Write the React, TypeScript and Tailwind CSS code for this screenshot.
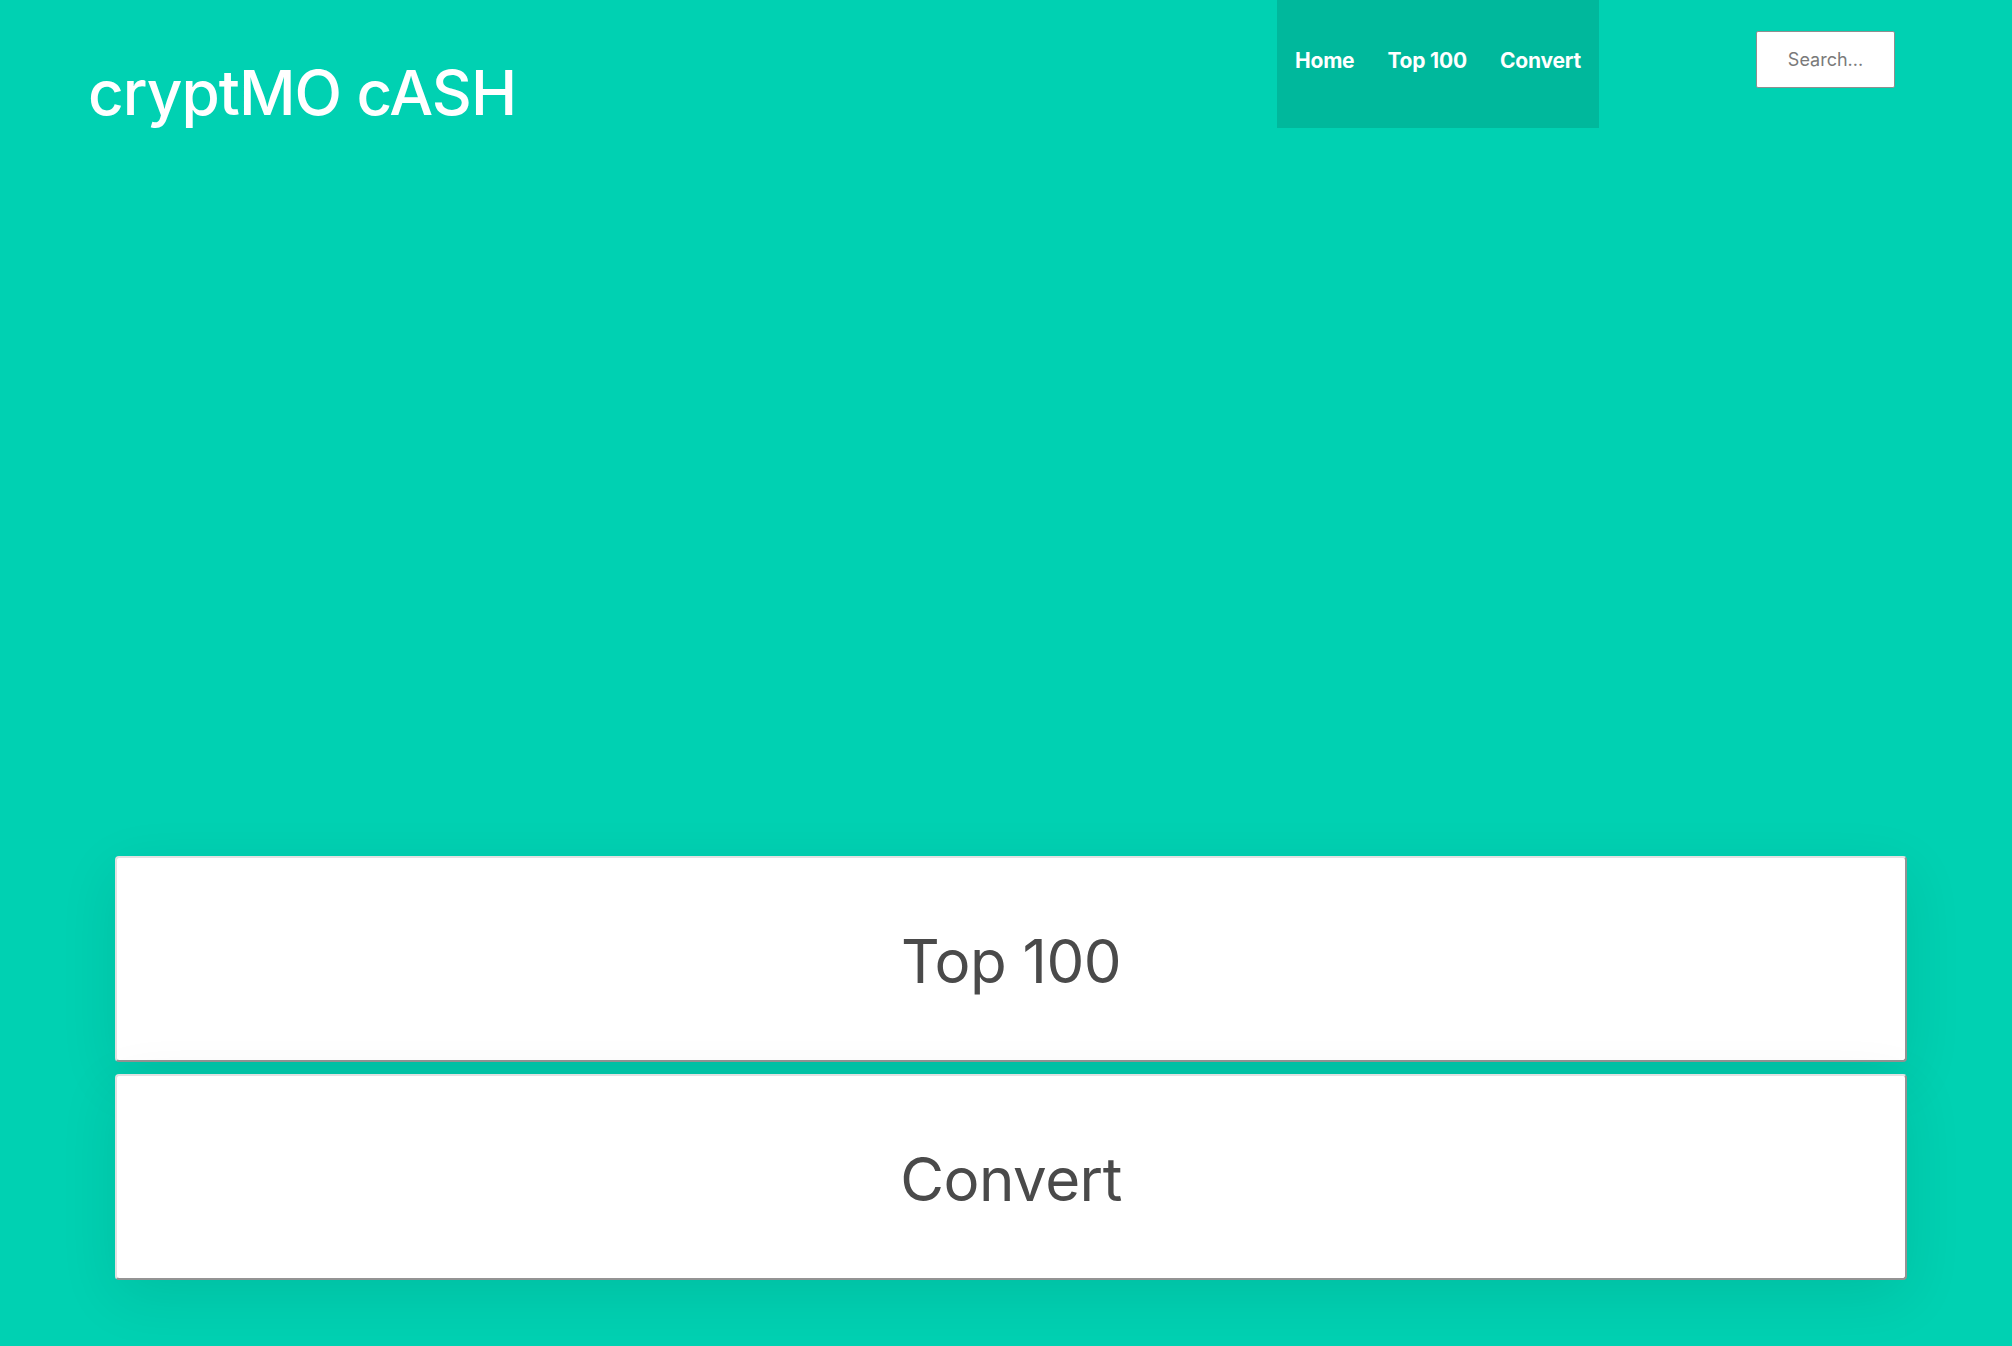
import React from "react";

export default function App() {
  return (
    <div className="min-h-screen w-full bg-[#00d1b2] font-['Inter','Liberation_Sans',sans-serif] overflow-hidden">
      <header className="flex items-start h-[128px]">
        <div className="flex-1 pl-[88px] pt-[62px]">
          <h1 className="text-[62px] leading-none font-medium text-white tracking-[-1px]">cryptMO cASH</h1>
        </div>
        <nav className="w-[322px] h-[128px] bg-[#00b89c] flex items-center justify-center gap-[33px] pb-[7px]">
          <a className="text-white font-bold text-[21px] tracking-[-0.2px]">Home</a>
          <a className="text-white font-bold text-[21px] tracking-[-0.2px]">Top 100</a>
          <a className="text-white font-bold text-[21px] tracking-[-0.2px]">Convert</a>
        </nav>
        <div className="ml-[157px] mr-[117px] mt-[31px]">
          <input
            placeholder="Search..."
            className="w-[139px] h-[57px] bg-white border border-[#8f8f8f] rounded-[2px] text-center text-[18px] text-[#4a4a4a] placeholder:text-[#7a7a7a] outline-none"
          />
        </div>
      </header>
      <main className="pl-[115px] pr-[105px] pt-[728px] pb-[66px] flex flex-col gap-[12px]">
        <a className="h-[206px] bg-white rounded-[4px] border-2 border-t-[#e2e2e2] border-l-[#e2e2e2] border-b-[#939393] border-r-[#939393] shadow-[0_16px_60px_rgba(0,0,0,0.09)] flex items-center justify-center">
          <span className="text-[60px] text-[#4a4a4a] leading-none tracking-[-0.5px] pt-[3px]">Top 100</span>
        </a>
        <a className="h-[206px] bg-white rounded-[4px] border-2 border-t-[#e2e2e2] border-l-[#e2e2e2] border-b-[#939393] border-r-[#939393] shadow-[0_16px_60px_rgba(0,0,0,0.09)] flex items-center justify-center">
          <span className="text-[60px] text-[#4a4a4a] leading-none tracking-[-0.5px] pt-[3px]">Convert</span>
        </a>
      </main>
    </div>
  );
}
